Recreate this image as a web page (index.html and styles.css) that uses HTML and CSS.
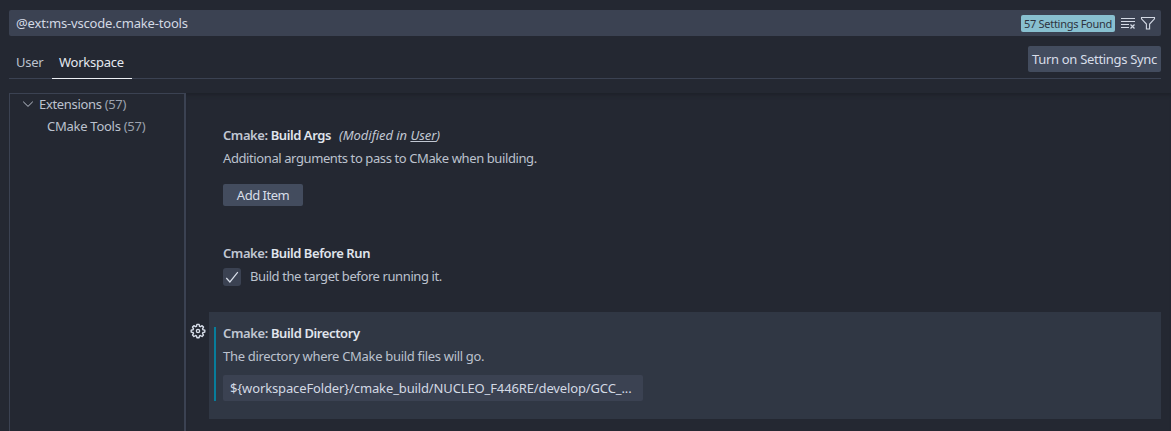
FILE: index.html
```html
<!DOCTYPE html>
<html lang="en">
<head>
<meta charset="utf-8">
<title>Settings</title>
<link rel="stylesheet" href="styles.css">
</head>
<body>
<main class="editor">
  <div class="search">
    <span class="query">@ext:ms-vscode.cmake-tools</span>
    <span class="badge">57 Settings Found</span>
    <svg class="clear" width="16" height="16" viewBox="0 0 16 16" fill="none" stroke="currentColor"><path d="M1 3.5h14M1 6.5h14M1 9.5h8M1 12.5h8"/><path d="M10.5 9.5l4 4M14.5 9.5l-4 4" stroke-width="1.2"/></svg>
    <svg class="filter" width="16" height="16" viewBox="0 0 16 16" fill="none" stroke="currentColor" stroke-width="1.1"><path d="M1.5 2.5h13v1.3L9.6 9v5H6.4V9L1.5 3.8z"/></svg>
  </div>
  <header class="header">
    <nav class="tabs">
      <a class="tab tab-user">User</a>
      <a class="tab active">Workspace</a>
    </nav>
    <button class="button sync">Turn on Settings Sync</button>
  </header>
  <div class="body">
    <aside class="toc">
      <div class="toc-row">
        <svg width="16" height="16" viewBox="0 0 16 16" fill="none" stroke="currentColor"><path d="M3.2 5.7L8 10.4l4.8-4.7"/></svg>
        <span>Extensions <span class="count">(57)</span></span>
      </div>
      <div class="toc-row child"><span>CMake Tools <span class="count">(57)</span></span></div>
    </aside>
    <section class="settings">
      <article class="setting args">
        <h3 class="title"><span class="category">Cmake: </span>Build Args<em class="scope">(Modified in <u>User</u>)</em></h3>
        <p class="desc">Additional arguments to pass to CMake when building.</p>
        <button class="button add">Add Item</button>
      </article>
      <article class="setting before">
        <h3 class="title"><span class="category">Cmake: </span>Build Before Run</h3>
        <label class="check-row">
          <span class="checkbox"><svg width="16" height="16" viewBox="0 0 16 16" fill="none" stroke="currentColor" stroke-width="1.2"><path d="M2.3 9l3.6 4L13.8 3.2"/></svg></span>
          <span class="check-label">Build the target before running it.</span>
        </label>
      </article>
      <div class="focus-row">
        <svg class="gear" width="16" height="16" viewBox="0 0 16 16" fill="none" stroke="currentColor" stroke-width="1.4" stroke-linejoin="round"><path d="M6.9 1.4h2.2l.4 1.9.9.4 1.7-1 1.4 1.4-1 1.7.4.9 1.9.4v2l-1.9.4-.4.9 1 1.7-1.4 1.4-1.7-1-.9.4-.4 1.8H6.9l-.4-1.8-.9-.4-1.7 1-1.4-1.4 1-1.7-.4-.9-1.9-.4v-2l1.9-.4.4-.9-1-1.7 1.4-1.4 1.7 1 .9-.4z"/><circle cx="8" cy="8" r="1.6"/></svg>
        <article class="setting directory">
          <div class="modified">
            <h3 class="title"><span class="category">Cmake: </span>Build Directory</h3>
            <p class="desc">The directory where CMake build files will go.</p>
            <div class="text-input">${workspaceFolder}/cmake_build/NUCLEO_F446RE/develop/GCC_...</div>
          </div>
        </article>
      </div>
    </section>
  </div>
</main>
</body>
</html>
```
FILE: styles.css
```css
* { box-sizing: border-box; }
body {
  margin: 0;
  background: #242832;
  color: #bcc2ce;
  font: 13px/18px "Noto Sans", sans-serif;
}
h3, p { margin: 0; font-size: 13px; }
svg { display: block; flex: none; }
.editor {
  height: 431px;
  padding-top: 10px;
  display: flex;
  flex-direction: column;
  overflow: hidden;
}
.search {
  display: flex;
  align-items: center;
  height: 26px;
  margin: 0 10px 0 9px;
  padding: 0 5px 0 7px;
  border-radius: 2px;
  background: #3b4252;
  color: #d3d9e4;
}
.query { flex: 1; letter-spacing: -0.17px; }
.badge {
  width: 94px;
  height: 17px;
  margin-right: 5px;
  padding-left: 3px;
  border-radius: 2px;
  background: #88c0d0;
  color: #2e3440;
  font-size: 11px;
  line-height: 17px;
  letter-spacing: -0.29px;
  white-space: nowrap;
}
.clear { margin-right: 4px; }
.header {
  display: flex;
  justify-content: space-between;
  align-items: flex-start;
  height: 43px;
  margin: 0 10px 0 9px;
  padding-top: 10px;
  border-bottom: 1px solid #3b4252;
}
.tabs { display: flex; }
.tab {
  height: 33px;
  padding: 7px 7px 0;
  letter-spacing: -0.25px;
  white-space: nowrap;
}
.tab-user { width: 43px; }
.active {
  width: 80px;
  border-bottom: 1px solid #eceff4;
  color: #e5e9f0;
}
.button {
  border: 0;
  padding: 0;
  border-radius: 2px;
  background: #434c5e;
  color: #d8dee9;
  font: inherit;
  white-space: nowrap;
}
.sync { width: 133px; height: 26px; letter-spacing: -0.31px; }
.body {
  flex: 1;
  display: flex;
  margin-top: 14px;
  padding-left: 9px;
}
.toc {
  width: 177px;
  border: 1px solid #3b4252;
  border-right-width: 2px;
  border-bottom: 0;
}
.toc-row {
  display: flex;
  align-items: center;
  gap: 3px;
  height: 22px;
  padding: 0 0 2px 10px;
  letter-spacing: -0.33px;
}
.child { padding-left: 37px; letter-spacing: -0.27px; }
.count { color: #9ba1ad; }
.settings {
  flex: 1;
  padding-top: 33px;
  box-shadow: inset 0 5px 4px -3px #1d2029;
}
.setting { padding-left: 37px; }
.args { height: 118px; }
.before { height: 68px; }
.title {
  height: 18px;
  color: #e0e5ed;
  font-weight: 600;
  letter-spacing: -0.42px;
}
.category { color: #c1c7d2; }
.scope {
  margin-left: 8px;
  color: #c1c7d2;
  font-weight: 400;
  letter-spacing: -0.05px;
}
.desc { margin-top: 5px; letter-spacing: -0.4px; }
.add {
  display: block;
  width: 80px;
  height: 22px;
  margin-top: 17px;
  letter-spacing: -0.5px;
}
.check-row {
  display: flex;
  align-items: center;
  gap: 9px;
  height: 18px;
  margin-top: 6px;
}
.check-label { padding-bottom: 2px; letter-spacing: -0.4px; }
.checkbox {
  display: grid;
  place-items: center;
  width: 18px;
  height: 18px;
  border-radius: 3px;
  background: #3b4252;
  color: #d8dee9;
}
.focus-row {
  display: flex;
  padding: 0 10px 0 4px;
}
.gear {
  margin: 11px 3px 0 0;
  color: #d8dee9;
}
.directory {
  flex: 1;
  height: 107px;
  padding: 15px 0 0 5px;
  background: #303744;
}
.modified {
  height: 74px;
  padding-left: 7px;
  border-left: 2px solid #077d9b;
}
.modified .title { height: 13px; line-height: 13px; letter-spacing: -0.38px; }
.modified .desc { margin-top: 7px; letter-spacing: -0.31px; }
.text-input {
  width: 420px;
  height: 26px;
  margin-top: 10px;
  padding: 0 7px;
  border-radius: 2px;
  background: #3b4252;
  color: #d3d9e4;
  line-height: 26px;
  letter-spacing: -0.13px;
  white-space: nowrap;
}
```
